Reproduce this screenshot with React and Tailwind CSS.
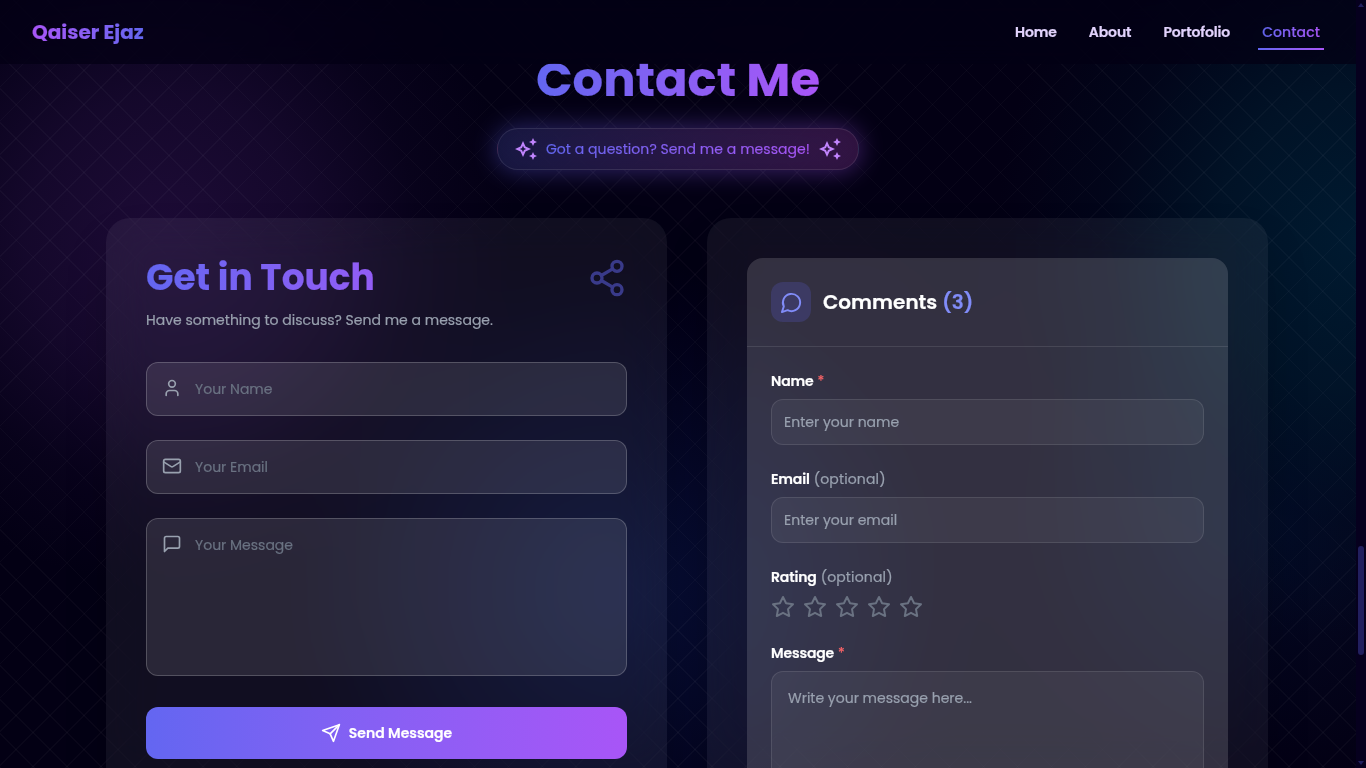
import { LuShare2, LuUser, LuMail } from "react-icons/lu";

const Icon = ({ className, children }) => (
  <svg viewBox="0 0 24 24" className={className} fill="none" stroke="currentColor" strokeWidth="2" strokeLinecap="round" strokeLinejoin="round">
    {children}
  </svg>
);

const MessageSquare = ({ className }) => (
  <Icon className={className}><path d="M21 15a2 2 0 0 1-2 2H7l-4 4V5a2 2 0 0 1 2-2h14a2 2 0 0 1 2 2z" /></Icon>
);

const MessageCircle = ({ className }) => (
  <Icon className={className}><path d="M7.9 20A9 9 0 1 0 4 16.1L2 22Z" /></Icon>
);

const Send = ({ className }) => (
  <Icon className={className}><path d="m22 2-7 20-4-9-9-4Z" /><path d="M22 2 11 13" /></Icon>
);

const Star = ({ className }) => (
  <Icon className={className}>
    <polygon points="12 2 15.09 8.26 22 9.27 17 14.14 18.18 21.02 12 17.77 5.82 21.02 7 14.14 2 9.27 8.91 8.26 12 2" />
  </Icon>
);

const Sparkle = () => (
  <svg viewBox="0 0 24 24" className="size-6 shrink-0 text-[#c084fc]" fill="currentColor">
    <path d="m19 9 1.25-2.75L23 5l-2.75-1.25L19 1l-1.25 2.75L15 5l2.75 1.25L19 9zm0 6-1.25 2.75L15 19l2.75 1.25L19 23l1.25-2.75L23 19l-2.75-1.25L19 15zM11.500 9.500 9 4 6.500 9.500 1 12l5.500 2.500L9 20l2.500-5.500L17 12l-5.500-2.500zm-1.510 3.490L9 15.170l-.990-2.180L5.830 12l2.180-.990L9 8.830l.990 2.180 2.180.990-2.180.990z" />
  </svg>
);

const gradientText = "bg-gradient-to-r from-[#6366f1] to-[#a855f7] bg-clip-text text-transparent";

function ContactField({ icon: FieldIcon, label, tall }) {
  return (
    <div className={`flex items-start rounded-xl border border-white/20 bg-white/10 px-[15px] pt-[15px] ${tall ? "h-[158px]" : "h-[54px]"}`}>
      <FieldIcon className="size-5 text-gray-400" />
      <span className="ml-[13px] pt-px text-[14px] leading-5 whitespace-nowrap text-gray-500">{label}</span>
    </div>
  );
}

function Label({ children, required, optional }) {
  return (
    <div className="h-5 text-[14px] leading-5 font-semibold tracking-[-0.15px] whitespace-nowrap text-white">
      {children}
      {required && <span className="ml-1 font-normal text-red-400">*</span>}
      {optional && <span className="ml-1 font-normal tracking-[0.15px] text-gray-400">(optional)</span>}
    </div>
  );
}

export default function App() {
  return (
    <div className="relative flex h-[768px] w-[1366px] overflow-hidden bg-[#030014] font-['Poppins','Inter',sans-serif] [-webkit-text-stroke-width:0.2px]">
      <div className="relative flex w-[1356px] flex-col overflow-hidden">
        <div className="absolute inset-0 bg-[radial-gradient(ellipse_350px_350px_at_165px_235px,#1d0b36,#190a31cc_40%,#10062666_72%,transparent),radial-gradient(ellipse_360px_400px_at_1356px_240px,#001a30,#00172bcc_38%,#000d2266_70%,transparent),radial-gradient(ellipse_260px_260px_at_1270px_520px,#040c28,#040a2480_50%,transparent),radial-gradient(ellipse_330px_330px_at_620px_590px,#080f36,#070c3099_50%,transparent)]" />
        <div className="absolute inset-0 bg-[repeating-linear-gradient(45deg,#ffffff07_0,#ffffff07_1px,transparent_1px,transparent_24px),repeating-linear-gradient(-45deg,#ffffff07_0,#ffffff07_1px,transparent_1px,transparent_24px)]" />
        <header className="relative z-10 flex h-16 shrink-0 items-center justify-between bg-[#030014]/70 pr-8 pl-8 backdrop-blur-xl">
          <div className="bg-gradient-to-r from-[#a855f7] to-[#6366f1] bg-clip-text text-[20px] leading-7 font-bold text-transparent">Qaiser Ejaz</div>
          <nav className="flex items-center gap-8 text-[14px] leading-5 font-semibold tracking-[-0.12px] text-[#e2d3fd]">
            <span>Home</span>
            <span>About</span>
            <span>Portofolio</span>
            <span className="relative mr-1 font-medium tracking-[0.1px]">
              <span className={gradientText}>Contact</span>
              <i className="absolute -right-1 -bottom-[8px] -left-1 h-0.5 bg-gradient-to-r from-[#6366f1] to-[#a855f7]" />
            </span>
          </nav>
        </header>

        <section className="relative -mt-[13px] flex flex-col items-center">
          <h1 className={`h-[58px] text-[48px] leading-[58px] font-bold whitespace-nowrap ${gradientText}`}>Contact Me</h1>
          <div className="relative mt-[19px]">
            <div className="absolute -inset-0.5 rounded-full bg-gradient-to-r from-[#6366f1] to-[#a855f7] opacity-35 blur-md" />
            <div className="relative flex h-[42px] w-[362px] items-center justify-center gap-2 rounded-full border border-white/10 bg-gradient-to-r from-[#17173f]/80 to-[#32133f]/80 backdrop-blur-xl">
              <Sparkle />
              <span className={`text-[14px] leading-5 tracking-[0.05px] whitespace-nowrap ${gradientText}`}>Got a question? Send me a message!</span>
              <Sparkle />
            </div>
          </div>
        </section>

        <main className="relative mt-12 flex gap-10 pl-[106px]">
          <section className="h-[620px] w-[561px] shrink-0 rounded-3xl bg-white/[0.055] p-10 shadow-2xl backdrop-blur-xl">
            <div className="flex h-10 items-center justify-between">
              <h2 className={`w-[347px] text-[36px] leading-10 font-bold whitespace-nowrap ${gradientText}`}>Get in Touch</h2>
              <LuShare2 className="size-10 text-[#6366f1] opacity-50" />
            </div>
            <p className="mt-3 h-5 text-[14px] leading-5 whitespace-nowrap text-gray-400">Have something to discuss? Send me a message.</p>
            <div className="mt-8 flex flex-col gap-6">
              <ContactField icon={LuUser} label="Your Name" />
              <ContactField icon={LuMail} label="Your Email" />
              <ContactField icon={MessageSquare} label="Your Message" tall />
            </div>
            <button className="mt-[31px] flex h-[52px] w-full items-center justify-center gap-2 rounded-xl bg-gradient-to-r from-[#6366f1] to-[#a855f7] text-[14px] font-semibold text-white">
              <Send className="size-5" />
              <span>Send Message</span>
            </button>
          </section>

          <section className="h-[620px] w-[561px] shrink-0 rounded-3xl bg-white/[0.055] p-10 shadow-2xl backdrop-blur-xl">
            <div className="h-[600px] rounded-2xl bg-white/[0.145]">
              <div className="flex h-[89px] items-center gap-3 border-b border-white/10 px-6">
                <div className="flex size-10 items-center justify-center rounded-xl bg-[#6366f1]/20 text-[#818cf8]">
                  <MessageCircle className="size-[23px]" />
                </div>
                <h3 className="text-[20px] leading-7 font-semibold whitespace-nowrap text-white">
                  Comments <span className="text-[#818cf8]">(3)</span>
                </h3>
              </div>
              <div className="px-6 pt-6 text-[14px]">
                <Label required>Name</Label>
                <div className="mt-2 flex h-[46px] items-center rounded-xl border border-white/10 bg-white/5 px-3 text-gray-400">Enter your name</div>
                <div className="mt-6"><Label optional>Email</Label></div>
                <div className="mt-2 flex h-[46px] items-center rounded-xl border border-white/10 bg-white/5 px-3 text-gray-400">Enter your email</div>
                <div className="mt-6"><Label optional>Rating</Label></div>
                <div className="mt-2 flex gap-2 text-gray-500">
                  {[1, 2, 3, 4, 5].map((n) => <Star key={n} className="size-6" />)}
                </div>
                <div className="mt-6"><Label required>Message</Label></div>
                <div className="mt-2 h-[140px] rounded-xl border border-white/10 bg-white/5 px-4 pt-4 leading-5 text-gray-400">Write your message here...</div>
              </div>
            </div>
          </section>
        </main>
      </div>

      <aside className="flex w-[10px] flex-col items-center bg-[#06001e]">
        <svg viewBox="0 0 8 5" className="mt-[2px] h-[5px] w-2 fill-[#211f5e]"><path d="M1 5 4 1l3 4z" /></svg>
        <div className="mt-[539px] h-[109px] w-[6px] rounded-full bg-[#211f5e]" />
        <svg viewBox="0 0 8 5" className="mt-[106px] h-[5px] w-2 fill-[#211f5e]"><path d="M1 0h6L4 4z" /></svg>
      </aside>
    </div>
  );
}
